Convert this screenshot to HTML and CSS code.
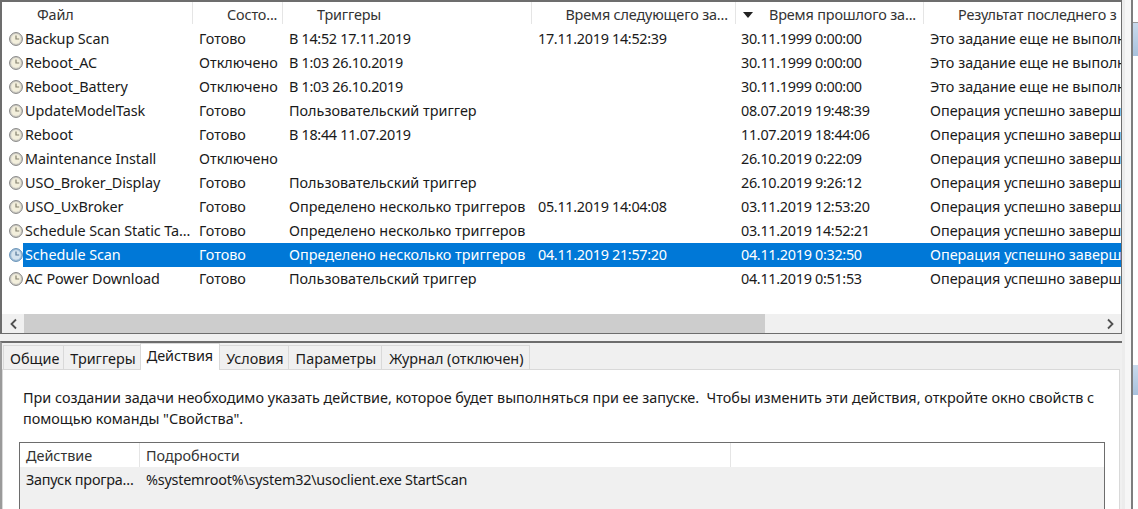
FILE: index.html
```html
<!DOCTYPE html>
<html lang="ru">
<head>
  <meta charset="UTF-8">
  <meta name="viewport" content="width=device-width, initial-scale=1.0">
  <title>Планировщик заданий</title>
  <link rel="stylesheet" href="styles.css">
</head>
<body>
  <div class="window">
    <div class="main">
      <div class="tasks">
        <div class="list">
          <div class="row head">
            <div class="hc c1 pad-name">Файл</div>
            <div class="hc c2 pad-state">Состо...</div>
            <div class="hc c3 pad-trig">Триггеры</div>
            <div class="hc c4 right">Время следующего за...</div>
            <div class="hc c5 sorted"><span class="arrow"></span>Время прошлого за...</div>
            <div class="hc c6 last">Результат последнего з</div>
          </div>

          <div class="row"><div class="c c1"><svg class="ico"><use href="#clock"/></svg><span>Backup Scan</span></div><div class="c c2">Готово</div><div class="c c3 dt">В 14:52 17.11.2019</div><div class="c c4">17.11.2019 14:52:39</div><div class="c c5">30.11.1999 0:00:00</div><div class="c c6">Это задание еще не выполнялось</div></div>
          <div class="row"><div class="c c1"><svg class="ico"><use href="#clock"/></svg><span>Reboot_AC</span></div><div class="c c2">Отключено</div><div class="c c3 dt">В 1:03 26.10.2019</div><div class="c c4"></div><div class="c c5">30.11.1999 0:00:00</div><div class="c c6">Это задание еще не выполнялось</div></div>
          <div class="row"><div class="c c1"><svg class="ico"><use href="#clock"/></svg><span>Reboot_Battery</span></div><div class="c c2">Отключено</div><div class="c c3 dt">В 1:03 26.10.2019</div><div class="c c4"></div><div class="c c5">30.11.1999 0:00:00</div><div class="c c6">Это задание еще не выполнялось</div></div>
          <div class="row"><div class="c c1"><svg class="ico"><use href="#clock"/></svg><span>UpdateModelTask</span></div><div class="c c2">Готово</div><div class="c c3">Пользовательский триггер</div><div class="c c4"></div><div class="c c5">08.07.2019 19:48:39</div><div class="c c6">Операция успешно завершена</div></div>
          <div class="row"><div class="c c1"><svg class="ico"><use href="#clock"/></svg><span>Reboot</span></div><div class="c c2">Готово</div><div class="c c3 dt">В 18:44 11.07.2019</div><div class="c c4"></div><div class="c c5">11.07.2019 18:44:06</div><div class="c c6">Операция успешно завершена</div></div>
          <div class="row"><div class="c c1"><svg class="ico"><use href="#clock"/></svg><span>Maintenance Install</span></div><div class="c c2">Отключено</div><div class="c c3"></div><div class="c c4"></div><div class="c c5">26.10.2019 0:22:09</div><div class="c c6">Операция успешно завершена</div></div>
          <div class="row"><div class="c c1"><svg class="ico"><use href="#clock"/></svg><span>USO_Broker_Display</span></div><div class="c c2">Готово</div><div class="c c3">Пользовательский триггер</div><div class="c c4"></div><div class="c c5">26.10.2019 9:26:12</div><div class="c c6">Операция успешно завершена</div></div>
          <div class="row"><div class="c c1"><svg class="ico"><use href="#clock"/></svg><span>USO_UxBroker</span></div><div class="c c2">Готово</div><div class="c c3">Определено несколько триггеров</div><div class="c c4">05.11.2019 14:04:08</div><div class="c c5">03.11.2019 12:53:20</div><div class="c c6">Операция успешно завершена</div></div>
          <div class="row"><div class="c c1"><svg class="ico"><use href="#clock"/></svg><span>Schedule Scan Static Ta...</span></div><div class="c c2">Готово</div><div class="c c3">Определено несколько триггеров</div><div class="c c4"></div><div class="c c5">03.11.2019 14:52:21</div><div class="c c6">Операция успешно завершена</div></div>
          <div class="row selected"><div class="c c1"><svg class="ico"><use href="#clock-sel"/></svg><span>Schedule Scan</span></div><div class="c c2">Готово</div><div class="c c3">Определено несколько триггеров</div><div class="c c4">04.11.2019 21:57:20</div><div class="c c5">04.11.2019 0:32:50</div><div class="c c6">Операция успешно завершена</div></div>
          <div class="row"><div class="c c1"><svg class="ico"><use href="#clock"/></svg><span>AC Power Download</span></div><div class="c c2">Готово</div><div class="c c3">Пользовательский триггер</div><div class="c c4"></div><div class="c c5">04.11.2019 0:51:53</div><div class="c c6">Операция успешно завершена</div></div>
        </div>

        <div class="hscroll">
          <div class="sbtn"><svg width="9" height="12"><path d="M7 1.5 2.5 6 7 10.5" fill="none" stroke="#505050" stroke-width="1.8"/></svg></div>
          <div class="track"><div class="thumb"></div></div>
          <div class="sbtn"><svg width="9" height="12"><path d="M2 1.5 6.5 6 2 10.5" fill="none" stroke="#505050" stroke-width="1.8"/></svg></div>
        </div>
      </div>

      <div class="details">
        <div class="tabs">
          <div class="tab">Общие</div>
          <div class="tab">Триггеры</div>
          <div class="tab active">Действия</div>
          <div class="tab">Условия</div>
          <div class="tab">Параметры</div>
          <div class="tab">Журнал (отключен)</div>
        </div>
        <div class="page">
          <p class="info">При создании задачи необходимо указать действие, которое будет выполняться при ее запуске.&nbsp; Чтобы изменить эти действия, откройте окно свойств с помощью команды "Свойства".</p>
          <div class="actions">
            <div class="ahead">
              <div class="ac1">Действие</div>
              <div class="ac2">Подробности</div>
              <div class="ac3"></div>
            </div>
            <div class="arow">
              <div class="ac1">Запуск програ...</div>
              <div class="ac2">%systemroot%\system32\usoclient.exe StartScan</div>
            </div>
          </div>
        </div>
      </div>
    </div>

    <div class="side">
      <div class="side-line"></div>
      <div class="side-far">
        <div class="blue blue-top"></div>
        <div class="blue blue-mid"></div>
      </div>
    </div>
  </div>

  <svg class="defs" width="0" height="0">
    <symbol id="clock" viewBox="0 0 14 14">
      <circle cx="7" cy="7" r="6.4" fill="#d8d6cc" stroke="#808080"/>
      <circle cx="7" cy="7" r="4.7" fill="#f3efdc"/>
      <path d="M7 3.4V7H10.2" fill="none" stroke="#85816f" stroke-width="1.2"/>
    </symbol>
    <symbol id="clock-sel" viewBox="0 0 14 14">
      <circle cx="7" cy="7" r="6.4" fill="#a9c3da" stroke="#5f8db4"/>
      <circle cx="7" cy="7" r="4.7" fill="#d5e3ee"/>
      <path d="M7 3.4V7H10.2" fill="none" stroke="#56799a" stroke-width="1.2"/>
    </symbol>
  </svg>
</body>
</html>
```

FILE: styles.css
```css
html, body {
  margin: 0;
  padding: 0;
  height: 100%;
  overflow: hidden;
}
body {
  font-family: "Noto Sans", "Open Sans", sans-serif;
  font-size: 14.4px;
  color: #1a1a1a;
  background: #f0f0f0;
}
.defs {
  display: block;
}
.window {
  display: flex;
  height: 509px;
}
.main {
  width: 1122px;
  display: flex;
  flex-direction: column;
}
.tasks {
  height: 334px;
  box-sizing: border-box;
  border: 2px solid #6d6d6d;
  border-width: 2px 1px 1px 2px;
  background: #fff;
  display: flex;
  flex-direction: column;
}
.list {
  flex: 1;
  overflow: hidden;
}
.row {
  display: flex;
  height: 24px;
  line-height: 24px;
  white-space: nowrap;
}
.head {
  height: 25px;
  color: #333;
}
.c, .hc {
  box-sizing: border-box;
  overflow: hidden;
  flex: none;
}
.c {
  padding-left: 6px;
}
.c1 { width: 191px; }
.c2 { width: 90px; }
.c3 { width: 249px; }
.c4 { width: 204px; }
.c5 { width: 188px; }
.c6 { width: 197px; }
.c.c4, .c.c5, .c.dt {
  letter-spacing: -0.3px;
}
.c.c5 {
  padding-left: 5px;
}
.hc {
  border-right: 1px solid #e5e5e5;
  text-align: center;
  margin-bottom: 3px;
  line-height: 26px;
  height: 22px;
  letter-spacing: -0.15px;
}
.hc.last {
  border-right: 0;
  text-align: left;
  padding-left: 34px;
}
.pad-name {
  text-align: left;
  padding-left: 35px;
}
.pad-state {
  text-align: left;
  padding-left: 34px;
}
.pad-trig {
  text-align: left;
  padding-left: 34px;
}
.hc.right {
  text-align: right;
  padding-right: 7px;
}
.sorted {
  text-align: left;
  padding-left: 33px;
  position: relative;
}
.arrow {
  position: absolute;
  left: 7px;
  top: 10px;
  border: 5px solid transparent;
  border-top: 6px solid #222;
  border-bottom: 0;
}
.c.c1 {
  display: flex;
  align-items: center;
  padding-left: 7px;
  letter-spacing: -0.1px;
}
.ico {
  width: 14px;
  height: 14px;
  flex: none;
  margin-right: 2px;
}
.selected {
  background: #0078d7;
  color: #fff;
}
.selected .c1 {
  background: linear-gradient(to right, #fff 21px, #0078d7 21px);
}
.hscroll {
  height: 19px;
  display: flex;
  background: #f0f0f0;
}
.sbtn {
  width: 22px;
  flex: none;
  display: flex;
  align-items: center;
  justify-content: center;
}
.track {
  flex: 1;
}
.thumb {
  width: 741px;
  height: 100%;
  background: #cdcdcd;
}
.details {
  flex: 1;
  margin-top: 7px;
  border-top: 2px solid #6d6d6d;
  border-left: 2px solid #9a9a9a;
  display: flex;
  flex-direction: column;
  min-height: 0;
}
.tabs {
  display: flex;
  padding: 1px 0 0 1px;
  height: 25px;
  align-items: flex-end;
}
.tab {
  height: 23px;
  line-height: 25px;
  padding: 0 4px 0 6px;
  background: #f0f0f0;
  border: 1px solid #d9d9d9;
  border-bottom: 0;
  margin-right: -1px;
}
.tab:nth-child(n+5) {
  padding: 0 5px 0 7px;
}
.tab.active {
  background: #fff;
  height: 26px;
  line-height: 24px;
  margin-bottom: -1px;
  position: relative;
  padding: 0 6px;
}
.page {
  flex: 1;
  margin-right: 2px;
  background: #fff;
  border: 1px solid #d9d9d9;
  border-bottom: 0;
  padding: 0 14px 0 16px;
  min-height: 0;
}
.info {
  margin: 17px 0 0 4px;
  line-height: 21px;
}
.actions {
  margin: 13px 0 0 0;
  border: 1px solid #6d6d6d;
  border-bottom: 0;
  height: 80px;
}
.ahead {
  display: flex;
  height: 24px;
  line-height: 25px;
  background: #fff;
  color: #333;
}
.arow {
  display: flex;
  height: 60px;
  line-height: 26px;
  background: #f0f0f0;
  letter-spacing: -0.22px;
}
.ac1 {
  width: 120px;
  flex: none;
  padding-left: 6px;
  box-sizing: border-box;
  white-space: nowrap;
}
.ahead .ac1, .ahead .ac2 {
  border-right: 1px solid #e5e5e5;
}
.ac2 {
  width: 591px;
  flex: none;
  padding-left: 6px;
  box-sizing: border-box;
}
.side {
  flex: 1;
  display: flex;
}
.side-line {
  width: 11px;
  flex: none;
  box-sizing: border-box;
  background: #f6f6f6;
  border-left: 3px solid #ececec;
  border-right: 2px solid #7d7d7d;
}
.side-far {
  flex: 1;
  background: #fff;
  position: relative;
}
.blue {
  position: absolute;
  left: 0;
  right: 0;
  background: linear-gradient(#c9daec, #a9c2dd);
}
.blue-top {
  top: 22px;
  height: 33px;
  border-top: 1px solid #9a9a9a;
}
.blue-mid {
  top: 365px;
  height: 30px;
}
```
